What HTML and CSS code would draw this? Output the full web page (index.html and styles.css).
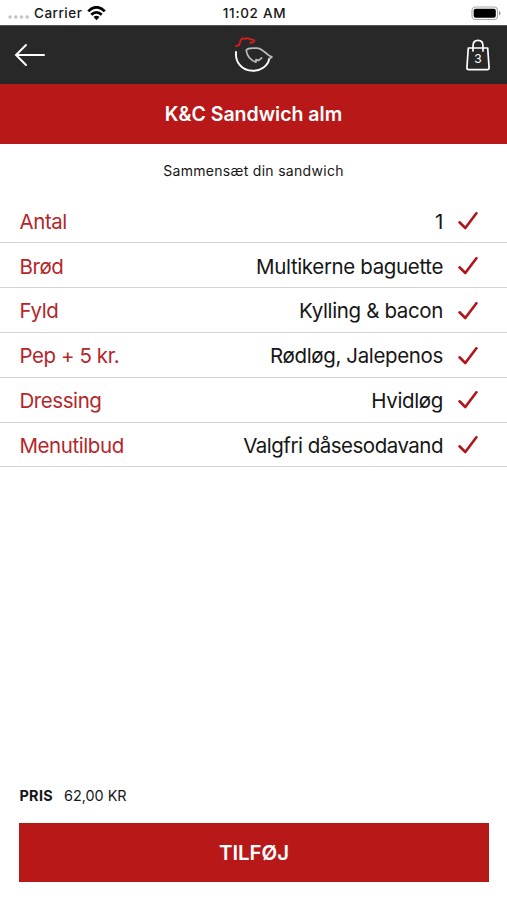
FILE: index.html
```html
<!DOCTYPE html>
<html lang="da">
<head>
<meta charset="utf-8">
<title>K&amp;C Sandwich alm</title>
<link rel="stylesheet" href="styles.css">
</head>
<body>
<svg class="defs" width="0" height="0"><symbol id="check" viewBox="0 0 20 18"><path d="M1.5 10.3 7.3 16 18.4 1.3" fill="none" stroke="currentColor" stroke-width="2.6" stroke-linecap="round" stroke-linejoin="round"/></symbol></svg>
<div class="screen">
  <div class="status">
    <div class="carrier">
      <svg width="22" height="6" viewBox="0 0 22 6" fill="#c4c4c4"><circle cx="2.1" cy="3" r="1.8"/><circle cx="7.8" cy="3" r="1.8"/><circle cx="13.5" cy="3" r="1.8"/><circle cx="19.2" cy="3" r="1.8"/></svg>
      <span>Carrier</span>
      <svg class="wifi" width="19" height="15" viewBox="0 0 19 15"><g fill="none" stroke="#000" stroke-width="2.8"><path d="M1.3 5.3C6-.1 13-.1 17.7 5.3"/><path d="M4.3 8.8C7.4 5.5 11.6 5.5 14.7 8.8"/></g><path d="M6.5 11Q9.5 8.6 12.5 11L9.5 14.2Z"/></svg>
    </div>
    <div class="clock">11:02 AM</div>
    <svg class="battery" width="30" height="15" viewBox="0 0 30 15"><rect x="1" y="1" width="25.5" height="12.5" rx="3.5" fill="#fff" stroke="#aaa" stroke-width="1.1"/><rect x="2.7" y="2.7" width="22.1" height="9.1" rx="2"/><path d="M28 5v4.5Q29.5 9 29.5 7.2 29.5 5.5 28 5Z" fill="#999"/></svg>
  </div>
  <header class="nav">
    <svg class="back" width="32" height="24" viewBox="0 0 32 24" fill="none" stroke="#fff" stroke-width="2" stroke-linecap="round"><path d="M30 12H2M12 2 2 12 12 22"/></svg>
    <svg class="logo" width="42" height="38" viewBox="0 0 42 38" fill="none" stroke-linecap="round" stroke-linejoin="round"><path d="M3.2 10.1 6 9C7.5 7.7 6.5 5 8.5 3.2 10 1.5 12 3.5 13.8 2.4 16.2 1.1 16 4 19 3.6 22.5 3.3 22 6.5 17.3 6.7" stroke="#d91c1c" stroke-width="1.9"/><path d="M3 16C2.2 25.5 8 34.8 20 34.8 28 34.8 34.8 30 36.3 22.7" stroke="#fff" stroke-width="1.9"/><path d="M36.3 22.7 39 21 35.5 19.2C31 15.5 28 11.7 23.3 12.1 19 12.4 15.5 11.3 13.2 14.2 14.1 20 17 24.3 23 26.1L23 23.5 25.4 24.6 28.6 22" stroke="#bbb" stroke-width="1.7"/></svg>
    <div class="bag">
      <svg width="26" height="32" viewBox="0 0 26 32" fill="none" stroke="#fff"><path d="M3.3 9H22.7L24.1 28.8Q24.1 30.7 22.3 30.7H3.7Q1.9 30.7 1.9 28.8Z" stroke-width="1.7" stroke-linejoin="round"/><path d="M8 12V7Q8 1.4 13 1.4 18 1.4 18 7v5" stroke-width="1.7" stroke-linecap="round"/></svg>
      <span class="count">3</span>
    </div>
  </header>
  <h1 class="title"><span>K&amp;C Sandwich alm</span></h1>
  <p class="intro">Sammensæt din sandwich</p>
  <main class="options">
    <div class="row"><span class="label">Antal</span><span class="value">1</span><svg class="check"><use href="#check"/></svg></div>
    <div class="row"><span class="label">Brød</span><span class="value">Multikerne baguette</span><svg class="check"><use href="#check"/></svg></div>
    <div class="row"><span class="label">Fyld</span><span class="value">Kylling &amp; bacon</span><svg class="check"><use href="#check"/></svg></div>
    <div class="row"><span class="label">Pep + 5 kr.</span><span class="value">Rødløg, Jalepenos</span><svg class="check"><use href="#check"/></svg></div>
    <div class="row"><span class="label">Dressing</span><span class="value">Hvidløg</span><svg class="check"><use href="#check"/></svg></div>
    <div class="row"><span class="label">Menutilbud</span><span class="value wide">Valgfri dåsesodavand</span><svg class="check"><use href="#check"/></svg></div>
  </main>
  <footer class="footer">
    <div class="price"><strong>PRIS</strong><span>62,00 KR</span></div>
    <button class="add"><span>TILFØJ</span></button>
  </footer>
</div>
</body>
</html>
```
FILE: styles.css
```css
* { box-sizing: border-box; }
body { margin: 0; background: #fff; color: #161616; font-family: Inter, "Liberation Sans", sans-serif; }
.defs { position: absolute; }
.screen { height: 900px; display: flex; flex-direction: column; overflow: hidden; }
.status { height: 25px; flex: none; display: grid; grid-template-columns: 1fr auto 1fr; align-items: center; padding: 1px 6px 0 8px; font-size: 13.5px; font-weight: 500; line-height: 24px; }
.carrier { display: flex; align-items: center; }
.carrier > svg:first-child { margin-top: 8px; }
.carrier span { margin-left: 4px; letter-spacing: .5px; }
.wifi { margin-left: 5px; }
.clock { letter-spacing: .7px; }
.battery { justify-self: end; }
.nav { height: 59px; flex: none; background: #282828; display: grid; grid-template-columns: 1fr auto 1fr; align-items: center; padding: 0 16px 0 14px; border-top: 1px solid #555; }
.logo { margin-left: 2px; }
.bag { justify-self: end; position: relative; width: 26px; height: 32px; }
.bag svg { display: block; }
.count { position: absolute; inset: 10px 0 0; text-align: center; color: #fff; font-size: 12px; line-height: 19px; }
.title { height: 60px; flex: none; margin: 0; background: #b91818; color: #fff; display: flex; align-items: center; justify-content: center; font-size: 19.5px; font-weight: 600; }
.intro { margin: 17px 0 0; text-align: center; font-size: 14px; line-height: 20px; letter-spacing: .3px; }
.options { margin-top: 17.7px; }
.row { height: 44.8px; display: flex; align-items: center; padding: 1.4px 29px 0 19.5px; border-bottom: 1.5px solid #d5d5cf; font-size: 20.5px; letter-spacing: -.36px; white-space: nowrap; }
.label { color: #b5262a; letter-spacing: -.43px; }
.value { margin-left: auto; }
.value.wide { letter-spacing: -.5px; }
.check { width: 20px; height: 18px; margin-left: 15px; color: #b31419; flex: none; }
.footer { margin-top: auto; padding: 0 18px 18px 19px; }
.price { display: flex; gap: 11px; padding-left: .5px; font-size: 14.4px; line-height: 20px; margin-bottom: 17px; }
.price strong { font-weight: 700; letter-spacing: .3px; }
.add { display: flex; align-items: center; justify-content: center; width: 100%; height: 59px; padding: 0; border: 0; background: #b91818; color: #fff; font: 600 20.4px Inter, "Liberation Sans", sans-serif; }
```
